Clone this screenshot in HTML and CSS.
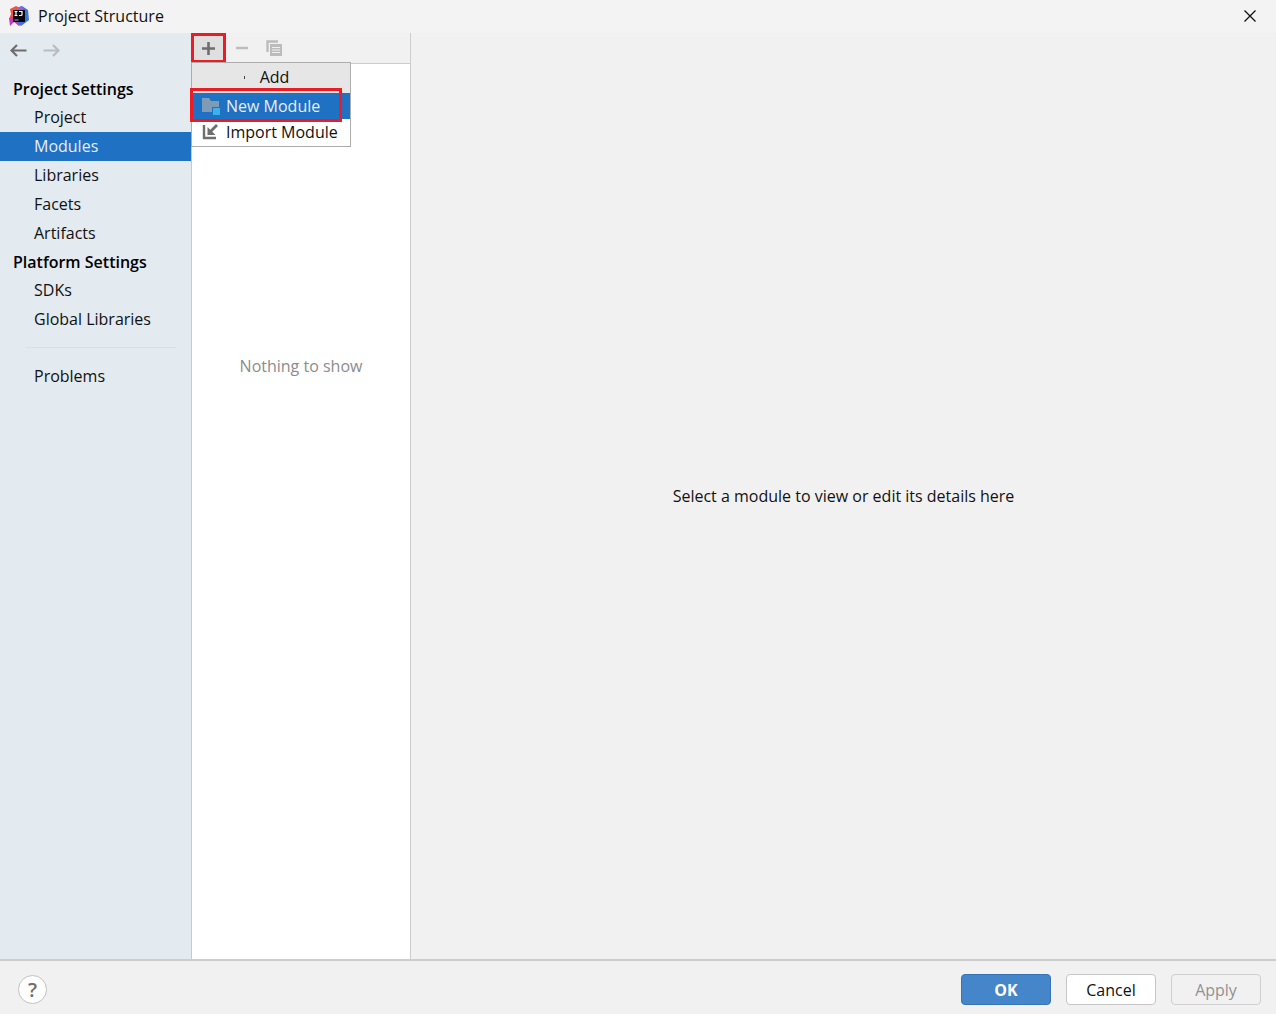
FILE: index.html
```html
<!DOCTYPE html>
<html lang="en">
<head>
  <meta charset="UTF-8" />
  <meta name="viewport" content="width=device-width, initial-scale=1.0" />
  <title>Project Structure</title>
  <link rel="stylesheet" href="styles.css">
</head>
<body>
  <header class="titlebar">
    <svg class="logo" width="20" height="20" viewBox="0 0 20 20">
      <path d="M1 3l6-3 6 3-4 8-9 2 2-5z" fill="#f4513f" />
      <path d="M0 12l7-2 7 7-4 3-5-4-4 4z" fill="#c33cb4" />
      <path d="M9 2l4-2 6 4 1 10-8 6-4-4z" fill="#3f74e0" />
      <path d="M9 2l3-2 3 3-6 4z" fill="#a05bd0" />
      <rect x="4" y="4" width="12" height="12" fill="#0b0710" />
      <path d="M5.500 5.500h3M7 5.500v4M5.500 9.500h3M10 5.500h3v3q0 1-1 1h-2" fill="none" stroke="#fff" stroke-width="1.200" />
      <path d="M5.500 14h4" stroke="#aaa" />
    </svg>
    <h1 class="title">Project Structure</h1>
    <button class="close-btn" aria-label="Close">
      <svg width="12" height="12" viewBox="0 0 12 12">
        <path d="M.5.5l11 11M11.500.5l-11 11" stroke="#111" stroke-width="1.300" />
      </svg>
    </button>
  </header>

  <main class="content">
    <nav class="sidebar">
      <div class="history">
        <button class="icon-btn" aria-label="Back">
          <svg width="17" height="13" viewBox="0 0 17 13">
            <path d="M16.500 6.500H1.500M7 1L1.500 6.500 7 12" fill="none" stroke="#6e6e6e" stroke-width="2.200" />
          </svg>
        </button>
        <button class="icon-btn" aria-label="Forward" disabled>
          <svg width="17" height="13" viewBox="0 0 17 13">
            <path d="M.5 6.500h15M10 1l5.500 5.500L10 12" fill="none" stroke="#b9bdc1" stroke-width="2.200" />
          </svg>
        </button>
      </div>
      <h2 class="group">Project Settings</h2>
      <a class="nav-item" href="#">Project</a>
      <a class="nav-item selected" href="#">Modules</a>
      <a class="nav-item" href="#">Libraries</a>
      <a class="nav-item" href="#">Facets</a>
      <a class="nav-item" href="#">Artifacts</a>
      <h2 class="group">Platform Settings</h2>
      <a class="nav-item" href="#">SDKs</a>
      <a class="nav-item" href="#">Global Libraries</a>
      <hr class="separator">
      <a class="nav-item" href="#">Problems</a>
    </nav>

    <section class="modules">
      <div class="toolbar">
        <button class="tool-btn add-btn" aria-label="Add">
          <svg width="13" height="13" viewBox="0 0 13 13">
            <path d="M6.500 0v13M0 6.500h13" stroke="#6e6e6e" stroke-width="2.600" />
          </svg>
        </button>
        <button class="tool-btn" aria-label="Remove" disabled>
          <svg width="13" height="13" viewBox="0 0 13 13">
            <path d="M0 6h12" stroke="#bcbcbc" stroke-width="2.400" />
          </svg>
        </button>
        <button class="tool-btn" aria-label="Copy" disabled>
          <svg width="16" height="16" viewBox="0 0 16 16">
            <path d="M1.500 12V1.500H12" fill="none" stroke="#bcbcbc" stroke-width="2.400" />
            <path d="M4 4h12v12H4z" fill="#bcbcbc" />
            <path d="M6 7.500h8M6 10h8M6 12.500h8" stroke="#f1f1f1" />
          </svg>
        </button>
      </div>
      <p class="empty">Nothing to show</p>

      <div class="popup">
        <div class="popup-title">
          <svg width="2" height="3" viewBox="0 0 2 3">
            <path d="M0 0h1v3H0z" fill="#444" />
          </svg>
          Add
        </div>
        <button class="popup-item selected">
          <svg width="20" height="18" viewBox="0 0 20 18">
            <path d="M1 1h7l2 3h8v6h-7v5H1z" fill="#7f9bb5" />
            <path d="M12 11h7v7h-7z" fill="#3db2ea" />
          </svg>
          New Module
        </button>
        <button class="popup-item">
          <svg width="20" height="18" viewBox="0 0 20 18">
            <path d="M3 2v13h12" fill="none" stroke="#6e6e6e" stroke-width="2.400" />
            <path d="M16 2l-7 7" stroke="#6e6e6e" stroke-width="2.800" />
            <path d="M6.500 4v8h8z" fill="#6e6e6e" />
          </svg>
          Import Module
        </button>
        <div class="highlight"></div>
      </div>
    </section>

    <section class="details">
      <p>Select a module to view or edit its details here</p>
    </section>
  </main>

  <footer class="footer">
    <button class="help-btn" aria-label="Help">?</button>
    <div class="actions">
      <button class="btn btn-primary">OK</button>
      <button class="btn">Cancel</button>
      <button class="btn" disabled>Apply</button>
    </div>
  </footer>
</body>
</html>
```

FILE: styles.css
```css
* {
  box-sizing: border-box;
}
body {
  margin: 0;
  min-height: 100vh;
  display: flex;
  flex-direction: column;
  font-family: "Open Sans", "Noto Sans", sans-serif;
  font-size: 16px;
  line-height: 20px;
  color: #111;
  background-color: #f1f1f1;
}
h1, h2, p {
  margin: 0;
  font-size: 16px;
}
button {
  font: inherit;
  color: inherit;
  border: none;
  padding: 0;
  background: none;
}
svg {
  display: block;
  flex-shrink: 0;
}

/* title bar */
.titlebar {
  height: 33px;
  display: flex;
  align-items: center;
  padding: 0 20px 2px 9px;
  background-color: #f3f3f3;
}
.title {
  flex: 1;
  margin-left: 9px;
  font-weight: normal;
}

.content {
  flex: 1;
  display: flex;
}

/* left navigation */
.sidebar {
  width: 192px;
  border-right: 1px solid #c5cacf;
  background-color: #e3eaf0;
}
.history {
  height: 42px;
  display: flex;
  gap: 16px;
  padding: 11px 10px;
}
.icon-btn {
  height: 13px;
}
.group {
  padding-left: 13px;
  line-height: 28px;
  font-weight: 600;
  color: #000;
}
.nav-item {
  display: block;
  padding-left: 34px;
  line-height: 29px;
  color: inherit;
  text-decoration: none;
}
.selected {
  background-color: #1f71c3;
  color: #e6eef7;
}
.separator {
  margin: 13px 15px 14px 26px;
  border: none;
  border-top: 1px solid #d9dfe6;
}

/* module list */
.modules {
  position: relative;
  width: 219px;
  border-right: 1px solid #cdcdcd;
  background-color: #fff;
}
.toolbar {
  height: 31px;
  display: flex;
  align-items: center;
  border-bottom: 1px solid #cdcdcd;
  background-color: #f1f1f1;
}
.tool-btn {
  width: 32px;
  height: 30px;
  display: flex;
  align-items: center;
  justify-content: center;
}
.add-btn {
  width: 35px;
  margin-left: -1px;
  border: 3px solid #ed1c24;
  background-color: #dfdfdf;
}
.empty {
  margin-top: 292px;
  text-align: center;
  color: #8c8c8c;
}
.popup {
  position: absolute;
  top: 29px;
  left: -1px;
  width: 160px;
  padding-bottom: 1px;
  border: 1px solid #adadad;
  background-color: #fff;
}
.popup-title {
  height: 30px;
  display: flex;
  align-items: center;
  justify-content: center;
  gap: 14px;
  padding-bottom: 2px;
  padding-right: 9px;
  background-color: #e6e6e6;
}
.popup-item {
  width: 100%;
  height: 26px;
  display: flex;
  align-items: center;
  gap: 5px;
  padding-left: 9px;
  white-space: nowrap;
}
.highlight {
  position: absolute;
  top: 25px;
  left: -2px;
  width: 152px;
  height: 34px;
  border: 3px solid #ed1c24;
}

.details {
  flex: 1;
  display: flex;
  align-items: center;
  justify-content: center;
}

/* bottom bar */
.footer {
  height: 55px;
  display: flex;
  align-items: center;
  justify-content: space-between;
  padding: 4px 15px 0 18px;
  border-top: 2px solid #cdcdcd;
}
.help-btn {
  width: 29px;
  height: 29px;
  border: 1px solid #c2c2c2;
  border-radius: 50%;
  font-size: 20px;
  font-weight: 600;
  color: #6e6e6e;
  background-color: #fff;
}
.actions {
  display: flex;
  gap: 15px;
}
.btn {
  width: 90px;
  height: 31px;
  border: 1px solid #c6c6c6;
  border-radius: 4px;
  background-color: #fff;
}
.btn-primary {
  border-color: #3674b5;
  font-weight: 700;
  color: #fff;
  background-color: #4585c9;
}
.btn:disabled {
  border-color: #cfcfcf;
  color: #929292;
  background-color: #f1f1f1;
}
```
